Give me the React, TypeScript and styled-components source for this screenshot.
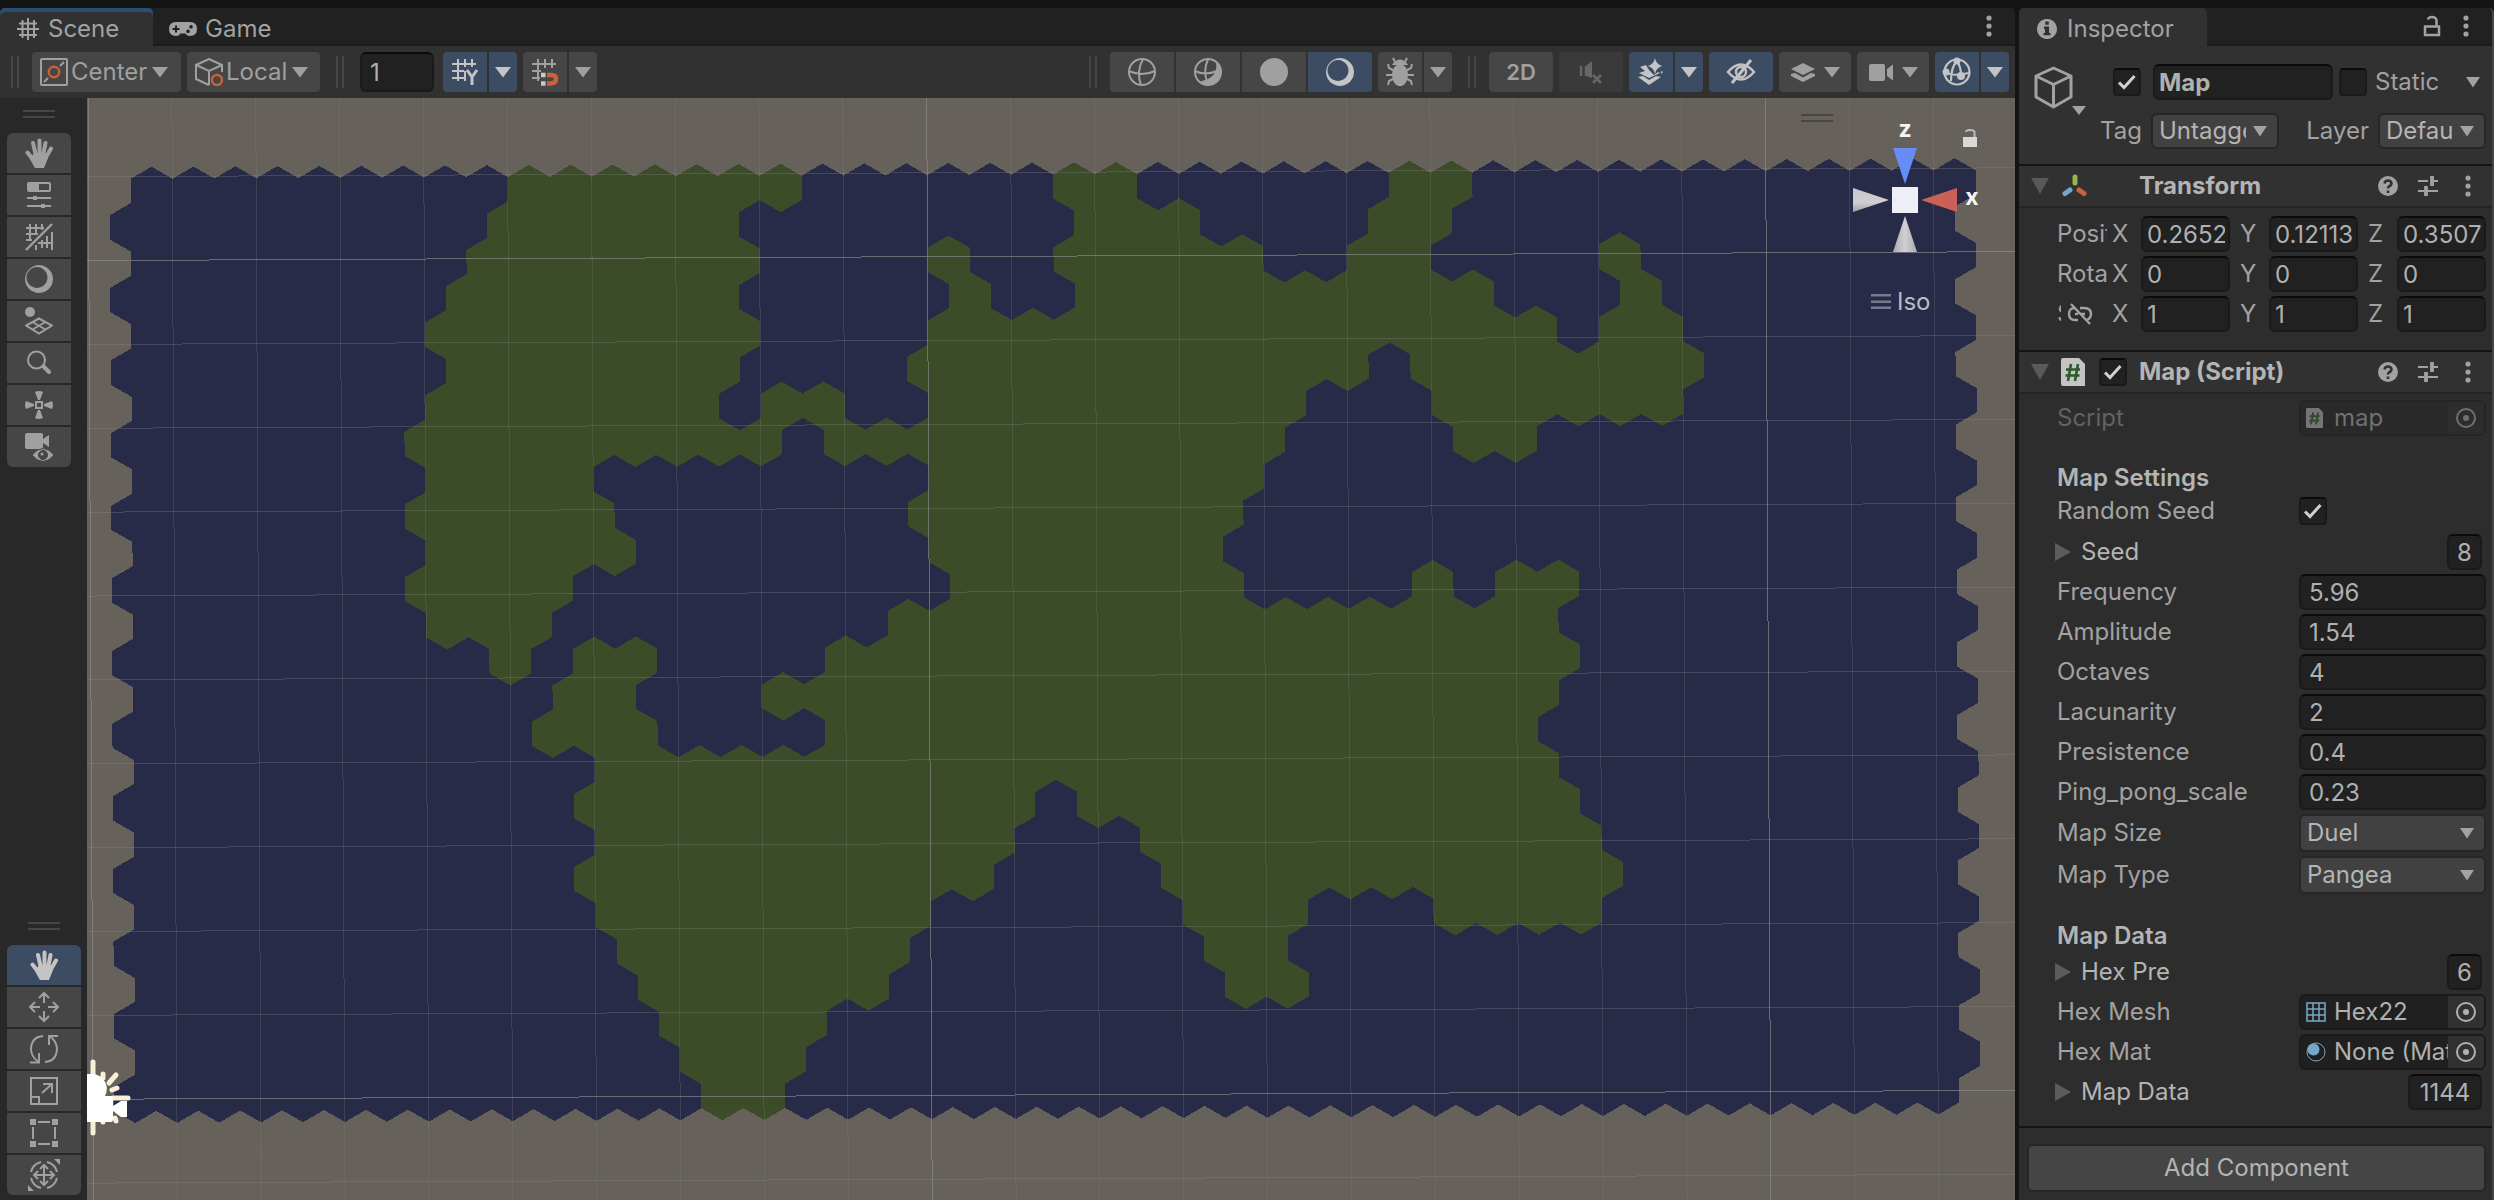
import React, { ReactNode, useId } from "react";
import styled, { createGlobalStyle, css } from "styled-components";

const color = {
  frame: "#141414",
  tabBar: "#212121",
  panel: "#313131",
  body: "#2d2d2d",
  strip: "#282828",
  button: "#464646",
  buttonOff: "#3a3a3a",
  active: "#3b4c63",
  field: "#212121",
  text: "#a2a2a2",
  bright: "#b4b4b4",
  icon: "#a0a0a0",
  iconActive: "#c4c4c4",
  orange: "#c8613c",
  blue: "#74a8c8",
};

const GlobalStyle = createGlobalStyle`
  *, *::before, *::after { box-sizing: border-box; }
  body {
    margin: 0;
    background: ${color.frame};
    color: ${color.text};
    font: 400 24px/28px Inter, "Liberation Sans", sans-serif;
  }
  button, input, select { font: inherit; color: inherit; margin: 0; }
  svg { display: block; flex: none; }
`;

/* ---------- window frame ---------- */

const Window = styled.main`
  display: grid;
  grid-template-columns: minmax(0, 1fr) 475px;
  column-gap: 4px;
  min-height: 100vh;
  padding-top: 8px;
`;

const Pane = styled.section`
  display: flex;
  flex-direction: column;
  min-width: 0;
  background: ${color.body};
  border-radius: 5px 5px 0 0;
`;

const InspectorPane = styled(Pane)`
  border-right: 2px solid #464646;
`;

const TabBar = styled.div`
  display: flex;
  align-items: center;
  height: 38px;
  background: ${color.tabBar};
  border-bottom: 2px solid #1c1c1c;
  border-radius: 5px 5px 0 0;
`;

const Tab = styled.button<{ $state?: "focused" | "open"; $width: number }>`
  display: flex;
  align-items: center;
  gap: 8px;
  align-self: flex-start;
  width: ${(p) => p.$width}px;
  height: 38px;
  padding: 4px 0 0 16px;
  border: 0;
  border-radius: 5px 5px 0 0;
  background: ${(p) => (p.$state ? color.panel : "transparent")};
  ${(p) => p.$state === "focused" && css`box-shadow: inset 0 4px 0 #2c4d74;`}
`;

const Spacer = styled.div`
  flex: 1;
`;

const IconButton = styled.button`
  display: grid;
  place-items: center;
  width: 24px;
  height: 24px;
  padding: 0;
  border: 0;
  background: none;
`;

const TabActions = styled.div<{ $end: number }>`
  display: flex;
  gap: 10px;
  margin-right: ${(p) => p.$end}px;
`;

/* ---------- scene toolbar ---------- */

const Toolbar = styled.div`
  display: flex;
  align-items: center;
  gap: 6px;
  height: 52px;
  padding: 0 6px 0 11px;
  background: ${color.panel};
`;

const Grip = styled.span<{ $before?: number; $after?: number }>`
  width: 8px;
  height: 32px;
  margin: 0 ${(p) => p.$after ?? 7}px 0 ${(p) => p.$before ?? 10}px;
  border: solid #464646;
  border-width: 0 2px;
`;

const ButtonGroup = styled.div`
  display: flex;
  gap: 2px;
  border-radius: 4px;
  overflow: hidden;
`;

const ToolButton = styled.button<{ $width: number; $active?: boolean }>`
  display: flex;
  align-items: center;
  justify-content: center;
  gap: 8px;
  width: ${(p) => p.$width}px;
  height: 40px;
  padding: 0;
  border: 0;
  background: ${(p) => (p.$active ? color.active : color.button)};
  color: ${(p) => (p.$active ? color.iconActive : color.icon)};
  &:disabled { background: ${color.buttonOff}; color: #666; }
`;

const PivotButton = styled(ToolButton)`
  justify-content: flex-start;
  gap: 3px;
  padding-left: 8px;
  & > svg:last-child { margin-left: 2px; }
`;

const ModeLabel = styled.b`
  font-size: 22px;
  font-weight: 600;
`;

const fieldBox = css`
  height: 36px;
  border: 2px solid #1a1a1a;
  border-top-color: #0b0b0b;
  border-radius: 6px;
  background: ${color.field};
  color: #b0b0b0;
  outline: 0;
`;

const SnapInput = styled.input`
  ${fieldBox}
  width: 74px;
  height: 40px;
  padding: 0 8px;
  margin-right: 3px;
`;

/* ---------- scene area ---------- */

const SceneArea = styled.div`
  display: grid;
  grid-template-columns: 87px minmax(0, 1fr);
  flex: 1;
`;

const ToolStrip = styled.nav`
  display: flex;
  flex-direction: column;
  justify-content: space-between;
  padding: 12px 6px 5px 7px;
  background: ${color.strip};
`;

const ToolStack = styled.div<{ $width: number }>`
  display: flex;
  flex-direction: column;
  gap: 2px;
  width: ${(p) => p.$width}px;
`;

const StripGrip = styled.span`
  align-self: center;
  width: 32px;
  height: 8px;
  margin-bottom: 13px;
  border: solid #464646;
  border-width: 2px 0;
`;

const StripButton = styled(ToolButton)`
  &:nth-child(2) { border-radius: 6px 6px 0 0; }
  &:last-child { border-radius: 0 0 6px 6px; }
`;

const Viewport = styled.div`
  position: relative;
  overflow: hidden;
  background: #66615a;
`;

const SceneCanvas = styled.svg`
  position: absolute;
  inset: 0;
  width: 100%;
  height: 100%;
`;

const OrientationOverlay = styled.div`
  position: absolute;
  top: 12px;
  right: 25px;
  display: flex;
  flex-direction: column;
  gap: 28px;
  width: 190px;
`;

const IsoButton = styled.button`
  display: flex;
  align-items: center;
  align-self: flex-start;
  gap: 6px;
  margin-left: 71px;
  padding: 0;
  border: 0;
  background: none;
  color: #bcbcc4;
`;

/* ---------- inspector ---------- */

const ObjectHeader = styled.header`
  display: grid;
  grid-template-columns: 70px minmax(0, 1fr);
  height: 118px;
  padding: 18px 6px 0 14px;
  background: ${color.panel};
`;

const HeaderRows = styled.div`
  display: flex;
  flex-direction: column;
  gap: 13px;
`;

const NameRow = styled.div`
  display: flex;
  align-items: center;
  height: 36px;
  padding: 0 6px 0 10px;
`;

const NameInput = styled.input`
  ${fieldBox}
  width: 180px;
  margin: 0 6px 0 12px;
  padding: 0 4px;
  font-weight: 700;
`;

const StaticLabel = styled.label`
  flex: 1;
  margin-left: 8px;
`;

const TagRow = styled.div`
  display: grid;
  grid-template-columns: 42px 128px 81px 108px;
  justify-content: end;
  align-items: center;
  column-gap: 9px;
  height: 34px;
`;

const TagLabel = styled.label`
  justify-self: end;
`;

const Component = styled.section`
  border-top: 2px solid ${color.frame};
`;

const ComponentHeader = styled.div`
  display: grid;
  grid-template-columns: 20px 26px 28px minmax(0, 1fr) auto;
  align-items: center;
  column-gap: 12px;
  height: 42px;
  padding: 0 12px 0 10px;
  background: ${color.panel};
  border-bottom: 2px solid #242424;
`;

const ComponentTitle = styled.h2`
  margin: 0;
  font-size: 24px;
  font-weight: 700;
  color: ${color.bright};
`;

const HeaderActions = styled.div`
  display: flex;
  gap: 16px;
`;

const VectorRows = styled.div`
  display: grid;
  gap: 4px;
  padding: 8px 6px 18px 38px;
`;

const VectorRow = styled.div`
  display: grid;
  grid-template-columns: minmax(0, 1fr) repeat(3, 118px);
  column-gap: 10px;
  align-items: center;
`;

const VectorName = styled.span<{ $narrow?: boolean }>`
  display: flex;
  align-items: center;
  gap: 6px;
  margin-right: -5px;
  overflow: hidden;
  white-space: nowrap;
  & > b { font-weight: 400; overflow: hidden; ${(p) => p.$narrow && "width: 4px;"} }
`;

const Axis = styled.label`
  display: grid;
  grid-template-columns: 29px 89px;
  align-items: center;
`;

const AxisInput = styled.input`
  ${fieldBox}
  width: 89px;
  padding: 0 3px 0 4px;
`;

const Properties = styled.div`
  display: grid;
  gap: 4px;
  padding: 6px 6px 16px 38px;
`;

const Property = styled.div<{ $height?: number; $after?: number; $muted?: boolean }>`
  display: grid;
  grid-template-columns: minmax(0, 1fr) 187px;
  align-items: center;
  height: ${(p) => p.$height ?? 36}px;
  margin-bottom: ${(p) => p.$after ?? 0}px;
  color: ${(p) => (p.$muted ? "#626262" : color.text)};
`;

const GroupTitle = styled.h3`
  height: 28px;
  margin: 24px 0 0;
  font-size: 24px;
  line-height: 28px;
  font-weight: 600;
  color: ${color.bright};
`;

const ValueInput = styled.input`
  ${fieldBox}
  width: 100%;
  padding: 0 8px;
`;

const Foldout = styled.div`
  display: flex;
  align-items: center;
  justify-content: space-between;
  height: 36px;
  padding-right: 4px;
`;

const FoldoutToggle = styled.button`
  display: flex;
  align-items: center;
  gap: 10px;
  margin-left: -2px;
  padding: 0;
  border: 0;
  background: none;
  color: ${color.bright};
`;

const CountInput = styled.input<{ $width: number }>`
  ${fieldBox}
  width: ${(p) => p.$width}px;
  padding: 0;
  text-align: center;
`;

const ObjectField = styled.div<{ $muted?: boolean }>`
  display: grid;
  grid-template-columns: 20px minmax(0, 1fr) 36px;
  align-items: center;
  height: 36px;
  padding-left: 5px;
  border: 2px solid ${(p) => (p.$muted ? "#252525" : "#1b1b1b")};
  border-radius: 6px;
  background: ${(p) => (p.$muted ? "#292929" : "#202020")};
  color: ${(p) => (p.$muted ? "#707070" : "#b0b0b0")};
  overflow: hidden;
`;

const ObjectName = styled.output`
  padding-left: 8px;
  overflow: hidden;
  white-space: nowrap;
`;

const PickerButton = styled.button<{ $muted?: boolean }>`
  display: grid;
  place-items: center;
  height: 32px;
  padding: 0;
  border: 0;
  background: ${(p) => (p.$muted ? "#2d2d2d" : "#313131")};
`;

const AddArea = styled.footer`
  flex: 1;
  padding: 16px 6px 8px 8px;
  border-top: 2px solid ${color.frame};
`;

const AddButton = styled.button`
  width: 100%;
  height: 48px;
  padding: 0;
  border: 2px solid #262626;
  border-radius: 6px;
  background: #454545;
  color: ${color.bright};
`;

const SelectShell = styled.span<{ $height?: number }>`
  display: grid;
  grid-template-columns: minmax(0, 1fr);
  align-items: center;
  height: ${(p) => p.$height ?? 38}px;
  & > * { grid-area: 1 / 1; }
  & > svg { justify-self: end; margin-right: 12px; pointer-events: none; }
`;

const SelectBox = styled.select`
  appearance: none;
  width: 100%;
  height: 100%;
  padding: 0 31px 0 6px;
  border: 2px solid #262626;
  border-radius: 6px;
  background: #414141;
  color: ${color.bright};
`;

const CheckShell = styled.span`
  display: grid;
  place-items: center;
  width: 28px;
  height: 28px;
  & > * { grid-area: 1 / 1; }
  & > svg { pointer-events: none; visibility: hidden; }
  & > input:checked + svg { visibility: visible; }
`;

const CheckBox = styled.input`
  appearance: none;
  width: 28px;
  height: 28px;
  border: 2px solid #1a1a1a;
  border-top-color: #0b0b0b;
  border-radius: 4px;
  background: ${color.field};
`;

/* ---------- icons ---------- */

type IconProps = { w?: number; h?: number; sw?: number; children: ReactNode };

const Line = ({ w = 28, h = 28, sw = 2, children }: IconProps) => (
  <svg width={w} height={h} viewBox={`0 0 ${w} ${h}`} fill="none" stroke="currentColor" strokeWidth={sw} aria-hidden>
    {children}
  </svg>
);

const Solid = ({ w = 28, h = 28, children }: IconProps) => (
  <svg width={w} height={h} viewBox={`0 0 ${w} ${h}`} fill="currentColor" aria-hidden>
    {children}
  </svg>
);

const Caret = ({ w = 16 }: { w?: number }) => (
  <Solid w={w} h={11}><path d={`M0 0H${w}L${w / 2} 10.5Z`} /></Solid>
);

const Kebab = () => (
  <Solid w={24} h={24}><circle cx="12" cy="4" r="2.6" /><circle cx="12" cy="12" r="2.6" /><circle cx="12" cy="20" r="2.6" /></Solid>
);

const HashIcon = () => (
  <Line w={24} h={24}><path d="M6.500 3v18M12 1v22M18 3v18M3 6.500h18M1 12h22M3 18h18" /></Line>
);

const GamepadIcon = () => (
  <Solid w={28} h={24}>
    <path fillRule="evenodd" transform="translate(-1 0)" d="M8 5H22Q29 5 29 12T22 19Q19 19 17.500 16.500H12.500Q11 19 8 19Q1 19 1 12T8 5ZM7 8.500V11H4.500V13H7V15.500H9V13H11.500V11H9V8.500ZM23 8a1.800 1.800 0 1 0 .1 0ZM20 12.500a1.800 1.800 0 1 0 .1 0Z" />
  </Solid>
);

const InfoIcon = () => (
  <Solid w={24} h={24}>
    <path fillRule="evenodd" d="M12 2a10 10 0 1 0 .01 0ZM10.200 4.500h3.600v3.200h-3.600ZM9 9.500h5v6.500h1.500v2.300H8.500V16H10v-4H9Z" />
  </Solid>
);

const LockIcon = () => (
  <Line w={24} h={24} sw={2.5}><path d="M5 12.500H19V21H5ZM16.500 12V6.500Q16 3 12 3Q8.500 3 8 5.500" /></Line>
);

const PivotIcon = () => (
  <Line w={28} h={28}>
    <rect x="1" y="1" width="26" height="26" rx="1" />
    <path d="M4 24l4-4M20 8l4-4" />
    <circle cx="14" cy="14" r="5.200" stroke={color.orange} strokeWidth="2.400" />
  </Line>
);

const LocalIcon = () => (
  <Line w={28} h={28}>
    <path d="M14 27L1 21V7L14 1L27 7V14M1 7L14 13L27 7M14 13V27" />
    <circle cx="22" cy="22" r="5" stroke={color.orange} strokeWidth="2.400" />
  </Line>
);

const GridSnapIcon = () => (
  <Line w={30} h={30}>
    <path d="M8 2v22M15 2v8M22 2v8M2 7h24M2 14h12M2 21h12M15 14v10" />
    <path d="M17 13l5 7l5-7M22 20v8" strokeWidth="3" />
  </Line>
);

const MagnetIcon = () => (
  <Line w={30} h={30}>
    <path d="M8 2v22M15 2v9M22 2v9M2 7h24M2 14h9M2 21h8" />
    <path d="M17 18H21Q26 18 26 22T21 26.500H17" stroke={color.orange} strokeWidth="4.500" />
    <path d="M11 18h4.500M11 26.500h4.500" stroke="#c9c9c9" strokeWidth="4.500" />
  </Line>
);

const WireSphere = () => (
  <Line w={30} h={30}><circle cx="15" cy="15" r="13" /><path d="M16 2Q9 15 14 28M2 14Q15 20 28 14" /></Line>
);

const ShadedWireSphere = () => (
  <Line w={30} h={30}>
    <circle cx="15" cy="15" r="13" /><path d="M15 2Q10 14 14 25M2 14Q12 19 24 14" />
    <path d="M22.500 4Q27 20 7 24.500Q11 28 15 28A13 13 0 0 0 22.500 4Z" fill="currentColor" stroke="none" />
  </Line>
);

const SolidSphere = () => <Solid w={30} h={30}><circle cx="15" cy="15" r="14" /></Solid>;

const LitSphere = () => (
  <Solid w={30} h={30}><path fillRule="evenodd" d="M15 1a14 14 0 1 0 .01 0ZM13 3a10.500 10.500 0 1 1-.01 0Z" /></Solid>
);

const BugIcon = () => (
  <Line w={30} h={30} sw={2}>
    <ellipse cx="15" cy="18" rx="7" ry="10" fill="currentColor" />
    <path d="M9 7Q15 0 21 7Z" fill="currentColor" />
    <path d="M10 5L8 1M20 5L22 1M8 13L4 11L3 7M22 13l4-2l1-4M7 18H1M23 18h6M8 22l-4 2l-1 4M22 22l4 2l1 4" />
  </Line>
);

const MutedIcon = () => (
  <Line w={26} h={26} sw={2.500}>
    <path d="M3 7v10M8 7v10" /><path d="M8 7L14 2V19L8 17Z" fill="currentColor" stroke="none" /><path d="M15 16l8 8M23 16l-8 8" />
  </Line>
);

const EffectsIcon = () => (
  <Solid w={30} h={30}>
    <path d="M19 1Q20 7 26 9Q20 11 19 17Q18 11 12 9Q18 7 19 1ZM4 10L10 8L13 13L18 18L22 15L24 16L13 21L3 16L9 14ZM2 20L7 19L13 23L20 19L25 20L13 28ZM25 14l2 1-2 2z" />
  </Solid>
);

const HiddenEyeIcon = () => (
  <Line w={30} h={30} sw={2.400}>
    <path d="M2 15Q15 0 28 15Q15 30 2 15Z" /><circle cx="15" cy="15" r="5" /><path d="M6 26L25 3" strokeWidth="3" />
  </Line>
);

const LayersIcon = () => (
  <Solid w={26} h={26}><path d="M13 4L25 10L13 16L1 10ZM1 15L5 14L13 18.500L21 14L25 15V17L13 23L1 17Z" /></Solid>
);

const VideoIcon = () => (
  <Solid w={26} h={26}><rect x="1" y="5" width="16" height="17" rx="2" /><path d="M19 10L25 5.500V21.500L19 17Z" /></Solid>
);

const GizmoSphereIcon = () => (
  <Line w={30} h={30} sw={2.200}>
    <circle cx="15" cy="15" r="12.500" /><path d="M15 4Q9 10 9 24M15 4Q19 10 19 18M4 15Q10 20 27 16" />
    <g fill="currentColor" stroke="none"><circle cx="15" cy="4" r="3.500" /><circle cx="4" cy="15" r="3.500" /><circle cx="19" cy="19" r="4" /></g>
  </Line>
);

const HandIcon = () => (
  <Line w={28} h={30} sw={4}>
    <path d="M2.500 14.500L9 23M8 5L11 18M14.500 2.500V18M20.500 5L18 18M26 10.500L20 21" strokeLinecap="round" />
    <path d="M9 15H20L23 20Q21 25 19 30H10Q8 27 5 21Z" fill="currentColor" stroke="none" />
  </Line>
);

const SlidersPanelIcon = () => (
  <Line w={28} h={30}>
    <rect x="3" y="3" width="22" height="8" rx="1" /><path d="M3 3H14V11H3ZM8 16H12V20H8ZM16 24H20V28H16Z" fill="currentColor" stroke="none" />
    <path d="M2 18H26M2 26H26" />
  </Line>
);

const GridCutIcon = () => (
  <Line w={28} h={28}>
    <path d="M1 27L27 1" strokeWidth="2.400" /><path d="M5 1v17M11 1v11M17 1v6M1 5h18M1 11h12M1 17h6M27 9v18M22 13v12M17 17v8M11 22v5M13 20h14" />
  </Line>
);

const SnapGridIcon = () => (
  <Line w={28} h={28}>
    <circle cx="5" cy="5" r="5" fill="currentColor" stroke="none" />
    <path d="M14 11.500L27 18.500L14 26.500L1 18.500ZM7.500 15L20.500 22.500M20.500 15L7.500 22.500" />
  </Line>
);

const SearchIcon = () => (
  <Line w={28} h={28}><circle cx="11.500" cy="11" r="8.500" /><path d="M18.500 17.500L24 23" strokeWidth="4" strokeLinecap="round" /></Line>
);

const AxesIcon = () => (
  <Solid w={28} h={28}>
    <path fillRule="evenodd" d="M10 10H18V18H10ZM12 12V16H16V12Z" />
    <path d="M10 1Q14-1 18 1L15 9H13ZM10 27Q14 29 18 27L15 19H13ZM1 10Q-1 14 1 18L9 15V13ZM27 10Q29 14 27 18L19 15V13Z" />
  </Solid>
);

const CameraViewIcon = () => (
  <Solid w={28} h={28}>
    <rect width="18" height="16" rx="2" y="0" /><path d="M18 6L24 2V14L18 10Z" />
    <path fillRule="evenodd" stroke="#464646" d="M7 22Q18 9 29 22Q18 35 7 22ZM18 17.500a4.500 4.500 0 1 0 .01 0Z" /><circle cx="17" cy="21" r="1.500" />
  </Solid>
);

const MoveIcon = () => (
  <Line w={32} h={32}>
    <path d="M16 12V2M11 7l5-5l5 5M16 20V30M11 25l5 5l5-5M12 16H2M7 11l-5 5l5 5M20 16H30M25 11l5 5l-5 5" />
  </Line>
);

const RotateIcon = () => (
  <Line w={30} h={30}>
    <path d="M14 2Q2 3 2 16Q3 24 10 28M10 19V28.500H1M16 28Q28 27 28 14Q27 6 20 2M20 11V2H29" />
  </Line>
);

const ScaleIcon = () => (
  <Line w={28} h={28}><path d="M1 1H27V27H1ZM1 20H9V27M12 16L22 7M13 7H22V16" /></Line>
);

const RectIcon = () => (
  <Line w={28} h={28}>
    <path d="M0 0h6v6H0zM22 0h6v6h-6zM0 22h6v6H0zM22 22h6v6h-6z" fill="currentColor" stroke="none" />
    <path d="M8 3H20M8 25H20M3 8V20M25 8V20" />
  </Line>
);

const TransformToolIcon = () => (
  <Line w={32} h={32}>
    <path d="M13 3A13.500 13.500 0 0 0 3 13M19 3A13.500 13.500 0 0 1 29 13M13 29A13.500 13.500 0 0 1 3 19M19 29A13.500 13.500 0 0 0 29 19" />
    <path d="M16 6V26M6 16H26M12 10l4-4l4 4M12 22l4 4l4-4M10 12l-4 4l4 4M22 12l4 4l-4 4" />
    <path d="M26 0H32V6ZM0 26L6 32H0Z" fill="currentColor" stroke="none" />
  </Line>
);

const CubeIcon = () => (
  <Line w={56} h={52} sw={3}>
    <path strokeLinejoin="round" d="M20.500 2L38 10V31L20.500 41L3 31V10ZM3 10L20.500 18.500L38 10M20.500 18.500V41" />
    <path d="M39 40H53L46 49Z" fill="currentColor" stroke="none" />
  </Line>
);

const Check = () => (
  <Line w={20} h={20} sw={3}><path d="M2 10.500L7 15.500L17.500 4" stroke="#d0d0d0" /></Line>
);

const FoldDown = () => (
  <Solid w={20} h={16}><path d="M2 0H20L11 16Z" fill="#595959" /></Solid>
);

const FoldRight = () => (
  <Solid w={16} h={18}><path d="M0 0V18L16 9Z" fill="#5c5c5c" /></Solid>
);

const TransformIcon = () => (
  <Line w={26} h={26} sw={5}>
    <path d="M14 4V10" stroke="#94b84c" strokeLinecap="round" />
    <path d="M9 17L4 20.500" stroke={color.blue} strokeLinecap="round" />
    <path d="M18 17L23 20.500" stroke={color.orange} strokeLinecap="round" />
  </Line>
);

const ScriptIcon = ({ size = 28, muted = false }: { size?: number; muted?: boolean }) => (
  <svg width={(size * 24) / 28} height={size} viewBox="0 0 24 28" fill="none" aria-hidden>
    <path d="M2 0H18L24 6V28H2Q0 28 0 26V2Q0 0 2 0Z" fill={muted ? "#757575" : "#c4c4c4"} />
    <path d="M10 6L7 23M17 6L14 23M5 11.500H19M4.500 17.500H18.500" stroke={muted ? "#2f4a2c" : "#2e5a2b"} strokeWidth="2.600" />
  </svg>
);

const HelpIcon = () => (
  <Line w={24} h={24}>
    <circle cx="12" cy="12" r="10" fill="currentColor" stroke="none" />
    <path d="M8.500 9.500Q9 6.500 12 6.500T15.500 9.500Q15.500 11 13.500 12Q12 13 12 14.500M12 16.500V19" stroke={color.panel} strokeWidth="2.600" />
  </Line>
);

const PresetIcon = () => (
  <Line w={24} h={24} sw={2.200}><path d="M2 7H12M16 7H22M2 17H8M10 17H22" /><path d="M16 2V12M10 12V22" strokeWidth="3.800" /></Line>
);

const UnlinkIcon = () => (
  <Line w={26} h={22} sw={2.400}>
    <path d="M8 5Q2 5 2 11T8 17H11M13 5H17Q24 5 24 11Q24 15 20 17M8 11h3M14 11h4M4 1L23 21" />
  </Line>
);

const TargetIcon = () => (
  <Line w={24} h={24}><circle cx="12" cy="12" r="9" /><circle cx="12" cy="12" r="3" fill="currentColor" stroke="none" /></Line>
);

const MeshIcon = () => (
  <Line w={20} h={20} sw={1.500}><path stroke={color.blue} d="M1 1H19V19H1ZM7 1V19M13 1V19M1 7H19M1 13H19" /></Line>
);

const MaterialIcon = () => (
  <Solid w={20} h={20}><circle cx="10" cy="10" r="9" fill="none" stroke={color.blue} /><circle cx="7.500" cy="7.500" r="6" fill={color.blue} /></Solid>
);

/* ---------- hex map ---------- */

const HEX_W = 41.93;
const HEX_R = HEX_W / Math.sqrt(3);
const COLS = 44;

/** Land spans per row, as inclusive column pairs. */
const LAND: number[][][] = [
  [[9, 15], [22, 23], [30, 31]],
  [[9, 14], [23, 25], [30, 31]],
  [[8, 14], [19, 19], [22, 26], [29, 30], [35, 35]],
  [[8, 14], [20, 20], [23, 32], [36, 36]],
  [[7, 14], [19, 33], [35, 36]],
  [[8, 14], [19, 29], [31, 37]],
  [[7, 13], [15, 16], [19, 27], [31, 36]],
  [[7, 15], [17, 27], [32, 33]],
  [[7, 10], [19, 26]],
  [[7, 11], [19, 26]],
  [[7, 11], [19, 25]],
  [[7, 10], [20, 26], [31, 31], [33, 34]],
  [[7, 9], [18, 33]],
  [[9, 9], [11, 12], [17, 34]],
  [[10, 11], [15, 33]],
  [[10, 12], [17, 33]],
  [[11, 33]],
  [[11, 21], [23, 34]],
  [[11, 20], [24, 34]],
  [[11, 20], [25, 35]],
  [[11, 18], [25, 27], [31, 34]],
  [[12, 18], [26, 27]],
  [[12, 17], [26, 27]],
  [[13, 16]],
  [[13, 15]],
  [[14, 15]],
];

/** Corners sit on an integer lattice of half widths and half radii, so neighbours share them exactly. */
const corner = (i: number, j: number) => `${((i * HEX_W) / 2).toFixed(2)} ${((j * HEX_R) / 2).toFixed(2)}`;

const hexPath = (row: number, col: number) => {
  const i = 2 * col + (row % 2 ? 0 : 1);
  const j = 3 * row;
  return `M${corner(i, j - 2)}L${corner(i + 1, j - 1)}L${corner(i + 1, j + 1)}L${corner(i, j + 2)}L${corner(i - 1, j + 1)}L${corner(i - 1, j - 1)}Z`;
};

const spanPath = (row: number, from: number, to: number) => {
  let d = "";
  for (let c = from; c <= to; c++) d += hexPath(row, c);
  return d;
};

const seaPath = LAND.map((_, r) => spanPath(r, 0, COLS - 1)).join("");
const landPath = LAND.map((spans, r) => spans.map(([a, b]) => spanPath(r, a, b)).join("")).join("");

const GRID = 83.87;
const steps = (n: number) => Array.from({ length: n }, (_, i) => i);

const HexScene = () => (
  <SceneCanvas role="img" aria-label="Scene view of the hex map">
    <g shapeRendering="crispEdges">
      <g transform="matrix(1 -0.0047 0.005 1 43.7 93)">
        <rect x="10" y="5" width="1810" height="895" fill="#282b48" />
        <path d={seaPath} fill="#282b48" />
        <path d={landPath} fill="#3c4c28" />
      </g>
      {steps(40).map((i) => (
        <line key={`v${i}`} x1={1 + i * GRID} y1="0" x2={11 + i * GRID} y2="2000"
          stroke="#8c8c8c" strokeOpacity={i % 10 ? 0.24 : 0.65} />
      ))}
      {steps(24).map((i) => (
        <line key={`h${i}`} x1="0" y1={78.7 + i * GRID} x2="4000" y2={60.3 + i * GRID}
          stroke="#8c8c8c" strokeOpacity={i % 10 === 1 ? 0.65 : 0.3} />
      ))}
    </g>
    <g transform="translate(-87 -98)">
      <g stroke="#f8efd6" strokeWidth="5" strokeLinecap="round">
        <path d="M93 1062V1080M93 1120V1133M113 1098H128M109 1083L116 1075M112 1090L117 1088M103 1074V1078M103 1118V1122M115 1118L116 1121" />
      </g>
      <path d="M80 1074H94A15 15 0 0 1 105 1096H111Q113 1096 113 1098V1106L121 1101H127V1117H121L113 1111V1120Q113 1122 111 1122H80Z" fill="#fff" />
    </g>
  </SceneCanvas>
);

const Orientation = () => (
  <OrientationOverlay>
    <svg width="190" height="150" viewBox="1800 110 190 150" fontFamily="Inter, sans-serif" fontWeight="700" fontSize="23">
      <defs>
        <linearGradient id="cone"><stop offset="0" stopColor="#a9aaae" /><stop offset="0.5" stopColor="#d0d0d4" /><stop offset="1" stopColor="#a9aaae" /></linearGradient>
        <linearGradient id="coneSide" x2="0" y2="1"><stop offset="0" stopColor="#c6c7cb" /><stop offset="0.6" stopColor="#cfcfd3" /><stop offset="1" stopColor="#a0a1a5" /></linearGradient>
      </defs>
      <path d="M1801 114h32v2h-32zM1801 120h32v2h-32z" fill="#4a4743" />
      <path d="M1893 148H1917L1905 184Z" fill="#668df5" />
      <path d="M1853 188V212L1889 200Z" fill="url(#coneSide)" />
      <path d="M1957 188V212L1921 200Z" fill="#cb6156" />
      <path d="M1893 252H1917L1905 216Z" fill="url(#cone)" />
      <rect x="1892" y="187" width="26" height="26" fill="#eeeff6" />
      <text x="1905" y="137" fill="#f4f4f4" textAnchor="middle">z</text>
      <text x="1972" y="205" fill="#f4f4f4" textAnchor="middle">x</text>
      <path d="M1963 137H1977V147H1963Z" fill="#d8d8d8" />
      <path d="M1974.500 137V132Q1974 130 1970 130Q1966 130 1966 132" fill="none" stroke="#bcbcbc" strokeWidth="2" />
    </svg>
    <IsoButton type="button">
      <Solid w={20} h={16}><path d="M0 0h20v2.500H0zM0 6.500h20V9H0zM0 12.500h20V15H0z" fill="#777a8c" /></Solid>
      Iso
    </IsoButton>
  </OrientationOverlay>
);

/* ---------- controls ---------- */

const Toggle = ({ id, on, label }: { id?: string; on?: boolean; label?: string }) => (
  <CheckShell>
    <CheckBox type="checkbox" id={id} defaultChecked={on} aria-label={label} />
    <Check />
  </CheckShell>
);

const Select = ({ id, value, height }: { id: string; value: string; height?: number }) => (
  <SelectShell $height={height}>
    <SelectBox id={id} defaultValue={value}><option>{value}</option></SelectBox>
    <Caret w={14} />
  </SelectShell>
);

const NumberRow = ({ label, value }: { label: string; value: string }) => {
  const id = useId();
  return (
    <Property>
      <label htmlFor={id}>{label}</label>
      <ValueInput id={id} defaultValue={value} />
    </Property>
  );
};

const SelectRow = ({ label, value }: { label: string; value: string }) => {
  const id = useId();
  return (
    <Property $height={38}>
      <label htmlFor={id}>{label}</label>
      <Select id={id} value={value} />
    </Property>
  );
};

const ArrayRow = ({ label, count, width = 35 }: { label: string; count: string; width?: number }) => (
  <Foldout>
    <FoldoutToggle type="button" aria-expanded={false}><FoldRight />{label}</FoldoutToggle>
    <CountInput $width={width} defaultValue={count} aria-label={`${label} size`} />
  </Foldout>
);

const ObjectRow = ({ label, value, icon, muted }: { label: string; value: string; icon: ReactNode; muted?: boolean }) => {
  const id = useId();
  return (
    <Property $muted={muted}>
      <label htmlFor={id}>{label}</label>
      <ObjectField $muted={muted}>
        {icon}
        <ObjectName id={id}>{value}</ObjectName>
        <PickerButton type="button" $muted={muted} aria-label={`Pick ${label}`}><TargetIcon /></PickerButton>
      </ObjectField>
    </Property>
  );
};

const Vector = ({ name, values, linked }: { name: string; values: string[]; linked?: boolean }) => (
  <VectorRow>
    <VectorName $narrow={linked}><b>{name}</b>{linked && <UnlinkIcon />}</VectorName>
    {["X", "Y", "Z"].map((axis, i) => (
      <Axis key={axis}>{axis}<AxisInput defaultValue={values[i]} aria-label={`${name} ${axis}`} /></Axis>
    ))}
  </VectorRow>
);

const Heading = ({ title, icon, toggle }: { title: string; icon: ReactNode; toggle?: boolean }) => (
  <ComponentHeader>
    <FoldDown />
    {icon}
    {toggle ? <Toggle on label={`${title} enabled`} /> : <span />}
    <ComponentTitle>{title}</ComponentTitle>
    <HeaderActions>
      <IconButton type="button" aria-label="Help"><HelpIcon /></IconButton>
      <IconButton type="button" aria-label="Presets"><PresetIcon /></IconButton>
      <IconButton type="button" aria-label="More"><Kebab /></IconButton>
    </HeaderActions>
  </ComponentHeader>
);

const DropButton = ({ active, label }: { active?: boolean; label: string }) => (
  <ToolButton type="button" $width={28} $active={active} aria-label={label}><Caret /></ToolButton>
);

const VIEW_TOOLS: [string, ReactNode][] = [
  ["View", <HandIcon />], ["Tool settings", <SlidersPanelIcon />], ["Grid", <GridCutIcon />], ["Draw mode", <LitSphere />],
  ["Snap", <SnapGridIcon />], ["Search", <SearchIcon />], ["Orientation", <AxesIcon />], ["Cameras", <CameraViewIcon />],
];

const EDIT_TOOLS: [string, ReactNode][] = [
  ["Hand", <HandIcon />], ["Move", <MoveIcon />], ["Rotate", <RotateIcon />],
  ["Scale", <ScaleIcon />], ["Rect", <RectIcon />], ["Transform", <TransformToolIcon />],
];

const ScenePane = () => (
  <Pane>
    <TabBar>
      <Tab type="button" $state="focused" $width={153}><HashIcon />Scene</Tab>
      <Tab type="button" $width={140}><GamepadIcon />Game</Tab>
      <Spacer />
      <TabActions $end={14}><IconButton type="button" aria-label="Scene menu"><Kebab /></IconButton></TabActions>
    </TabBar>
    <Toolbar>
      <Grip $before={0} />
      <ButtonGroup><PivotButton type="button" $width={149}><PivotIcon />Center<Caret /></PivotButton></ButtonGroup>
      <ButtonGroup><PivotButton type="button" $width={133}><LocalIcon />Local<Caret /></PivotButton></ButtonGroup>
      <Grip $after={10} />
      <SnapInput defaultValue="1" aria-label="Grid size" />
      <ButtonGroup>
        <ToolButton type="button" $width={44} $active aria-label="Grid axis"><GridSnapIcon /></ToolButton>
        <DropButton active label="Grid options" />
      </ButtonGroup>
      <ButtonGroup>
        <ToolButton type="button" $width={44} aria-label="Snapping"><MagnetIcon /></ToolButton>
        <DropButton label="Snapping options" />
      </ButtonGroup>
      <Spacer />
      <Grip $before={0} />
      <ButtonGroup>
        <ToolButton type="button" $width={64} aria-label="Wireframe"><WireSphere /></ToolButton>
        <ToolButton type="button" $width={64} aria-label="Shaded wireframe"><ShadedWireSphere /></ToolButton>
        <ToolButton type="button" $width={64} aria-label="Unlit"><SolidSphere /></ToolButton>
        <ToolButton type="button" $width={64} $active aria-label="Shaded"><LitSphere /></ToolButton>
      </ButtonGroup>
      <ButtonGroup>
        <ToolButton type="button" $width={44} aria-label="Debug draw"><BugIcon /></ToolButton>
        <DropButton label="Debug options" />
      </ButtonGroup>
      <Grip />
      <ButtonGroup><ToolButton type="button" $width={64}><ModeLabel>2D</ModeLabel></ToolButton></ButtonGroup>
      <ButtonGroup><ToolButton type="button" $width={64} disabled aria-label="Audio"><MutedIcon /></ToolButton></ButtonGroup>
      <ButtonGroup>
        <ToolButton type="button" $width={44} $active aria-label="Effects"><EffectsIcon /></ToolButton>
        <DropButton active label="Effects options" />
      </ButtonGroup>
      <ButtonGroup><ToolButton type="button" $width={64} $active aria-label="Scene visibility"><HiddenEyeIcon /></ToolButton></ButtonGroup>
      <ButtonGroup><ToolButton type="button" $width={72} aria-label="Overlays"><LayersIcon /><Caret /></ToolButton></ButtonGroup>
      <ButtonGroup><ToolButton type="button" $width={72} aria-label="Camera"><VideoIcon /><Caret /></ToolButton></ButtonGroup>
      <ButtonGroup>
        <ToolButton type="button" $width={44} $active aria-label="Gizmos"><GizmoSphereIcon /></ToolButton>
        <DropButton active label="Gizmo options" />
      </ButtonGroup>
    </Toolbar>
    <SceneArea>
      <ToolStrip>
        <ToolStack $width={64}>
          <StripGrip />
          {VIEW_TOOLS.map(([name, icon]) => (
            <StripButton key={name} type="button" $width={64} aria-label={name}>{icon}</StripButton>
          ))}
        </ToolStack>
        <ToolStack $width={74}>
          <StripGrip />
          {EDIT_TOOLS.map(([name, icon], i) => (
            <StripButton key={name} type="button" $width={74} $active={i === 0} aria-label={name}>{icon}</StripButton>
          ))}
        </ToolStack>
      </ToolStrip>
      <Viewport>
        <HexScene />
        <Orientation />
      </Viewport>
    </SceneArea>
  </Pane>
);

const CubeHolder = styled.span`
  display: block;
  width: 56px;
  height: 52px;
  justify-self: start;
  margin-top: 2px;
`;

const Inspector = () => (
  <InspectorPane>
    <TabBar>
      <Tab type="button" $state="open" $width={188}><InfoIcon />Inspector</Tab>
      <Spacer />
      <TabActions $end={14}>
        <IconButton type="button" aria-label="Lock"><LockIcon /></IconButton>
        <IconButton type="button" aria-label="Inspector menu"><Kebab /></IconButton>
      </TabActions>
    </TabBar>
    <ObjectHeader>
      <IconButton type="button" aria-label="Object icon"><CubeHolder><CubeIcon /></CubeHolder></IconButton>
      <HeaderRows>
        <NameRow>
          <Toggle on label="Active" />
          <NameInput defaultValue="Map" aria-label="Name" />
          <Toggle id="static" />
          <StaticLabel htmlFor="static">Static</StaticLabel>
          <Caret w={14} />
        </NameRow>
        <TagRow>
          <TagLabel htmlFor="tag">Tag</TagLabel>
          <Select id="tag" value="Untagged" height={36} />
          <TagLabel htmlFor="layer">Layer</TagLabel>
          <Select id="layer" value="Default" height={36} />
        </TagRow>
      </HeaderRows>
    </ObjectHeader>
    <Component>
      <Heading title="Transform" icon={<TransformIcon />} />
      <VectorRows>
        <Vector name="Position" values={["0.2652", "0.12113", "0.3507"]} />
        <Vector name="Rotation" values={["0", "0", "0"]} />
        <Vector name="Scale" values={["1", "1", "1"]} linked />
      </VectorRows>
    </Component>
    <Component>
      <Heading title="Map (Script)" icon={<ScriptIcon />} toggle />
      <Properties>
        <ObjectRow label="Script" value="map" icon={<ScriptIcon size={20} muted />} muted />
        <GroupTitle>Map Settings</GroupTitle>
        <Property $height={30} $after={4}>
          <label htmlFor="random-seed">Random Seed</label>
          <Toggle id="random-seed" on />
        </Property>
        <ArrayRow label="Seed" count="8" />
        <NumberRow label="Frequency" value="5.96" />
        <NumberRow label="Amplitude" value="1.54" />
        <NumberRow label="Octaves" value="4" />
        <NumberRow label="Lacunarity" value="2" />
        <NumberRow label="Presistence" value="0.4" />
        <NumberRow label="Ping_pong_scale" value="0.23" />
        <SelectRow label="Map Size" value="Duel" />
        <SelectRow label="Map Type" value="Pangea" />
        <GroupTitle>Map Data</GroupTitle>
        <ArrayRow label="Hex Pre" count="6" />
        <ObjectRow label="Hex Mesh" value="Hex22" icon={<MeshIcon />} />
        <ObjectRow label="Hex Mat" value="None (Material)" icon={<MaterialIcon />} />
        <ArrayRow label="Map Data" count="1144" width={74} />
      </Properties>
    </Component>
    <AddArea><AddButton type="button">Add Component</AddButton></AddArea>
  </InspectorPane>
);

export default function App() {
  return (
    <>
      <GlobalStyle />
      <Window>
        <ScenePane />
        <Inspector />
      </Window>
    </>
  );
}
